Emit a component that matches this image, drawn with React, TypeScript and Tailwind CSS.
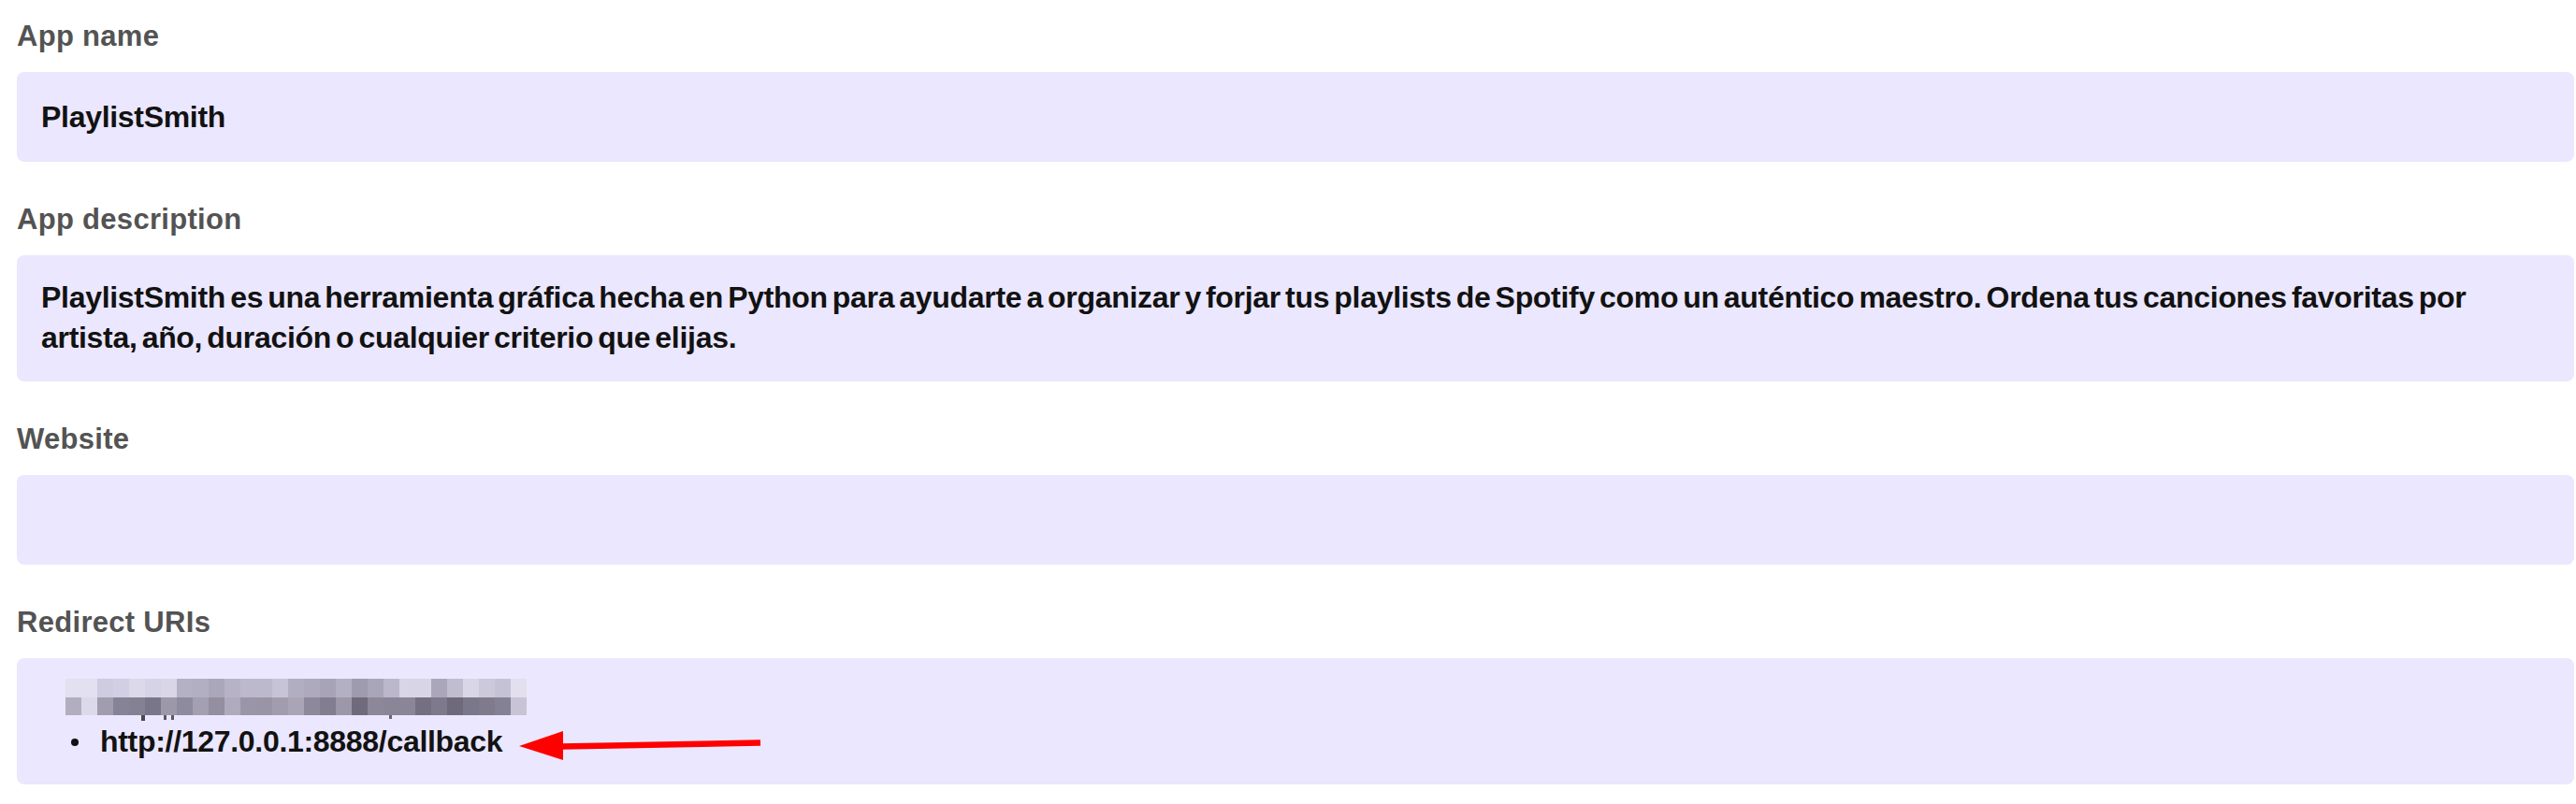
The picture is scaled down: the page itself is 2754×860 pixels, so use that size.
const mosaicTop = [
  '#e3e0ef', '#e3e0ef', '#cfcbe0', '#d2cee3', '#dcd9ea', '#d6d3e6', '#d9d6e8', '#b5b1c4',
  '#b3afc2', '#aba7ba', '#b7b3c6', '#bdb9cc', '#bdb9cc', '#c7c3d6', '#b2aec1', '#aeaabd',
  '#a8a4b7', '#b4b0c3', '#9f9baf', '#a9a5b8', '#bcb8cb', '#d8d5e7', '#d8d5e7', '#aba7ba',
  '#c1bdd0', '#d9d6e8', '#cdc9dc', '#c6c2d5', '#e2dfee',
]

const mosaicBottom = [
  '#b2aec0', '#dcd9ea', '#a19daf', '#878396', '#858194', '#7a7689', '#9c98aa', '#8f8b9e',
  '#a4a0b2', '#938fa1', '#afabbd', '#9a96a8', '#9995a7', '#a19daf', '#a9a5b7', '#8d899b',
  '#827e90', '#9c98aa', '#6f6b7d', '#8c889a', '#8a8698', '#8a8698', '#747082', '#7e7a8c',
  '#6e6a7c', '#7b778a', '#7f7b8d', '#858194', '#c8c4d6',
]

function Label({ children }: { children: React.ReactNode }) {
  return (
    <div className="h-[36px] text-[31px] font-bold leading-[36px] tracking-[0.3px] text-[#535353]">
      {children}
    </div>
  )
}

function Mosaic() {
  return (
    <div className="absolute left-[26px] top-[-3px] flex flex-col">
      <div className="flex h-[20px]">
        {mosaicTop.map((c, i) => (
          <div key={i} className="h-full w-[17px]" style={{ backgroundColor: c }} />
        ))}
      </div>
      <div className="flex h-[19px]">
        {mosaicBottom.map((c, i) => (
          <div key={i} className="h-full w-[17px]" style={{ backgroundColor: c }} />
        ))}
      </div>
    </div>
  )
}

function Arrow() {
  return (
    <svg
      className="absolute left-[532px] top-[70px]"
      width="270"
      height="45"
      viewBox="0 0 270 45"
    >
      <line x1="50" y1="24.5" x2="263" y2="20.5" stroke="#ff0000" strokeWidth="6.5" />
      <polygon points="5,24 52,8 52,39" fill="#ff0000" />
    </svg>
  )
}

export default function App() {
  return (
    <div className="min-h-[860px] w-full bg-white pl-[18px] pr-[2px] pt-[21px] font-['Liberation_Sans',Arial,sans-serif]">
      <div className="flex flex-col gap-[44px]">
        <section>
          <Label>App name</Label>
          <div className="mt-[20px] flex h-[96px] items-center rounded-[8px] bg-[#ebe7fe] px-[26px] text-[32px] font-bold leading-[43px] tracking-[-0.3px] text-[#121212]">
            PlaylistSmith
          </div>
        </section>

        <section>
          <Label>App description</Label>
          <div className="mt-[20px] rounded-[8px] bg-[#ebe7fe] px-[26px] pb-[25px] pt-[24px] text-[32px] font-bold leading-[43px] tracking-[-0.3px] text-[#121212] [word-spacing:-3.5px]">
            PlaylistSmith es una herramienta gráfica hecha en Python para ayudarte a organizar y
            forjar tus playlists de Spotify como un auténtico maestro. Ordena tus canciones
            favoritas por artista, año, duración o cualquier criterio que elijas.
          </div>
        </section>

        <section>
          <Label>Website</Label>
          <div className="mt-[20px] h-[96px] rounded-[8px] bg-[#ebe7fe]" />
        </section>

        <section>
          <Label>Redirect URIs</Label>
          <div className="relative mt-[20px] rounded-[8px] bg-[#ebe7fe] px-[26px] pb-[24px] pt-[25px] text-[32px] font-bold leading-[43px] tracking-[-0.3px] text-[#121212]">
            <div className="relative h-[43px]">
              <span className="absolute left-[107px] top-[36px] h-[6px] w-[4px] bg-[#4a4850]" />
              <span className="absolute left-[131px] top-[36px] h-[5px] w-[3px] bg-[#5a5860]" />
              <span className="absolute left-[139px] top-[36px] h-[5px] w-[3px] bg-[#5a5860]" />
              <span className="absolute left-[372px] top-[36px] h-[4px] w-[3px] bg-[#6a6870]" />
              <Mosaic />
            </div>
            <div className="flex h-[43px] items-center">
              <span className="ml-[32px] h-[8px] w-[8px] rounded-full bg-[#121212]" />
              <span className="ml-[23px]">http://127.0.0.1:8888/callback</span>
            </div>
            <Arrow />
          </div>
        </section>
      </div>
    </div>
  )
}
